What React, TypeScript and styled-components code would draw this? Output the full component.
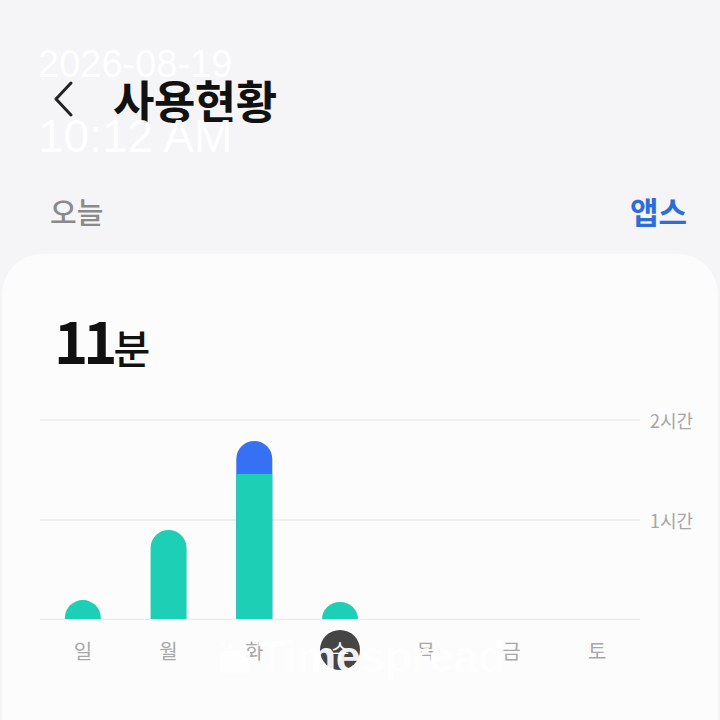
import React from "react";
import styled, { createGlobalStyle } from "styled-components";

const GlobalStyle = createGlobalStyle`
  html, body { margin: 0; padding: 0; background: #f5f5f7; }
  body { font-family: "Noto Sans CJK KR", "Noto Sans", sans-serif; }
`;

const Page = styled.div`
  position: relative;
  width: 720px;
  height: 720px;
  overflow: hidden;
  background: #f5f5f7;
  display: flex;
  flex-direction: column;
`;

const Header = styled.header`
  display: flex;
  align-items: center;
  padding: 72px 0 0 50px;
  height: 56px;
`;

const BackButton = styled.button`
  width: 28px;
  height: 40px;
  padding: 0;
  border: 0;
  background: transparent;
  display: flex;
  align-items: center;
  justify-content: center;
  margin-right: 35px;
`;

const Title = styled.h1`
  margin: 0;
  font-size: 45px;
  line-height: 56px;
  font-weight: 700;
  color: #111;
  letter-spacing: -0.5px;
`;

const TabsRow = styled.div`
  display: flex;
  justify-content: space-between;
  align-items: center;
  margin-top: 63px;
  padding: 0 33px 0 50px;
  height: 40px;
`;

const Tab = styled.span<{ $active?: boolean }>`
  font-size: ${(p) => (p.$active ? 31 : 29)}px;
  line-height: 40px;
  font-weight: ${(p) => (p.$active ? 700 : 500)};
  color: ${(p) => (p.$active ? "#2d6ddb" : "#8a8a8a")};
`;

const Card = styled.section`
  margin: 23px 2px 0;
  flex: 1;
  background: #fcfcfc;
  border-radius: 40px 40px 0 0;
  padding: 50px 0 0 38px;
  display: flex;
  flex-direction: column;
`;

const Total = styled.div`
  display: flex;
  align-items: baseline;
  margin-left: 14px;
  height: 70px;
  color: #111;
`;

const TotalNumber = styled.span`
  font-size: 58px;
  line-height: 70px;
  font-weight: 700;
  letter-spacing: -5px;
`;

const TotalUnit = styled.span`
  font-size: 40px;
  font-weight: 500;
  margin-left: 1px;
`;

const ChartRow = styled.div`
  display: flex;
  margin-top: 36px;
`;

const Plot = styled.svg`
  display: block;
  margin-top: 9px;
  flex: none;
`;

const AxisLabels = styled.div`
  display: flex;
  flex-direction: column;
  gap: 80px;
  margin-left: 10px;
`;

const AxisLabel = styled.span`
  font-size: 18px;
  line-height: 20px;
  color: #a6a6a6;
  white-space: nowrap;
`;

const DaysRow = styled.div`
  display: grid;
  grid-template-columns: repeat(7, 1fr);
  width: 600px;
  margin-top: 8px;
`;

const Day = styled.span<{ $today?: boolean }>`
  justify-self: center;
  width: 40px;
  height: 40px;
  border-radius: 50%;
  display: flex;
  align-items: center;
  justify-content: center;
  font-size: 20px;
  color: ${(p) => (p.$today ? "#ffffff" : "#a8a8a8")};
  background: ${(p) => (p.$today ? "#454545" : "transparent")};
`;

const DateStamp = styled.div`
  position: absolute;
  left: 38px;
  top: 45px;
  font-family: "Liberation Sans", Arial, sans-serif;
  color: #ffffff;
  font-size: 38px;
  line-height: 38px;
  opacity: 0.95;
`;

const TimeStamp = styled.div`
  position: absolute;
  left: 38px;
  top: 113px;
  font-family: "Liberation Sans", Arial, sans-serif;
  color: #ffffff;
  font-size: 46px;
  line-height: 46px;
  opacity: 0.95;
`;

const Watermark = styled.div`
  position: absolute;
  left: 220px;
  top: 632px;
  display: flex;
  align-items: center;
  gap: 8px;
  color: #ffffff;
  font-family: "Liberation Sans", Arial, sans-serif;
  font-weight: 700;
  font-size: 45px;
  line-height: 50px;
  letter-spacing: -0.5px;
  opacity: 0.92;
`;

const WIDTH = 600;
const COL = WIDTH / 7;
const BASE = 200;
const BAR_W = 36;

type Bar = { blueTop?: number; tealTop: number };

const bars: (Bar | null)[] = [
  { tealTop: 181 },
  { tealTop: 111 },
  { blueTop: 22, tealTop: 55 },
  { tealTop: 183 },
  null,
  null,
  null,
];

function roundTop(cx: number, top: number, base: number) {
  const r = BAR_W / 2;
  const h = base - top;
  if (h <= r) {
    return `M${cx - r},${base} A${r},${h} 0 0 1 ${cx + r},${base} Z`;
  }
  return `M${cx - r},${base} L${cx - r},${top + r} A${r},${r} 0 0 1 ${cx + r},${top + r} L${cx + r},${base} Z`;
}

const days = ["일", "월", "화", "수", "목", "금", "토"];

export default function App() {
  return (
    <>
      <GlobalStyle />
      <Page>
        <Header>
          <BackButton aria-label="뒤로">
            <svg width="24" height="40" viewBox="0 0 24 40">
              <path d="M19 3 L4 19 L19 35" fill="none" stroke="#222" strokeWidth="3" strokeLinecap="round" strokeLinejoin="round" />
            </svg>
          </BackButton>
          <Title>사용현황</Title>
        </Header>
        <TabsRow>
          <Tab>오늘</Tab>
          <Tab $active>앱스</Tab>
        </TabsRow>
        <Card>
          <Total>
            <TotalNumber>11</TotalNumber>
            <TotalUnit>분</TotalUnit>
          </Total>
          <ChartRow>
            <Plot width={WIDTH} height={203} viewBox={`0 0 ${WIDTH} 203`}>
              <line x1="0" x2={WIDTH} y1="1" y2="1" stroke="#ececec" strokeWidth="1.5" />
              <line x1="0" x2={WIDTH} y1="101" y2="101" stroke="#ececec" strokeWidth="1.5" />
              <line x1="0" x2={WIDTH} y1="200.5" y2="200.5" stroke="#ececec" strokeWidth="1.5" />
              {bars.map((b, i) => {
                if (!b) return null;
                const cx = COL * (i + 0.5);
                if (b.blueTop !== undefined) {
                  return (
                    <g key={i}>
                      <path d={roundTop(cx, b.blueTop, BASE)} fill="#3671f4" />
                      <rect x={cx - BAR_W / 2} y={b.tealTop} width={BAR_W} height={BASE - b.tealTop} fill="#1dcfb5" />
                    </g>
                  );
                }
                return <path key={i} d={roundTop(cx, b.tealTop, BASE)} fill="#1dcfb5" />;
              })}
            </Plot>
            <AxisLabels>
              <AxisLabel>2시간</AxisLabel>
              <AxisLabel>1시간</AxisLabel>
            </AxisLabels>
          </ChartRow>
          <DaysRow>
            {days.map((d, i) => (
              <Day key={d} $today={i === 3}>
                {d}
              </Day>
            ))}
          </DaysRow>
        </Card>
        <DateStamp>2026-08-19</DateStamp>
        <TimeStamp>10:12 AM</TimeStamp>
        <Watermark>
          <svg width="30" height="32" viewBox="0 0 30 32">
            <rect x="0" y="0" width="5" height="5" fill="#fff" />
            <rect x="8" y="3" width="5" height="5" fill="#fff" />
            <rect x="0" y="10" width="30" height="22" fill="#fff" />
          </svg>
          <span>Timespread</span>
        </Watermark>
      </Page>
    </>
  );
}
